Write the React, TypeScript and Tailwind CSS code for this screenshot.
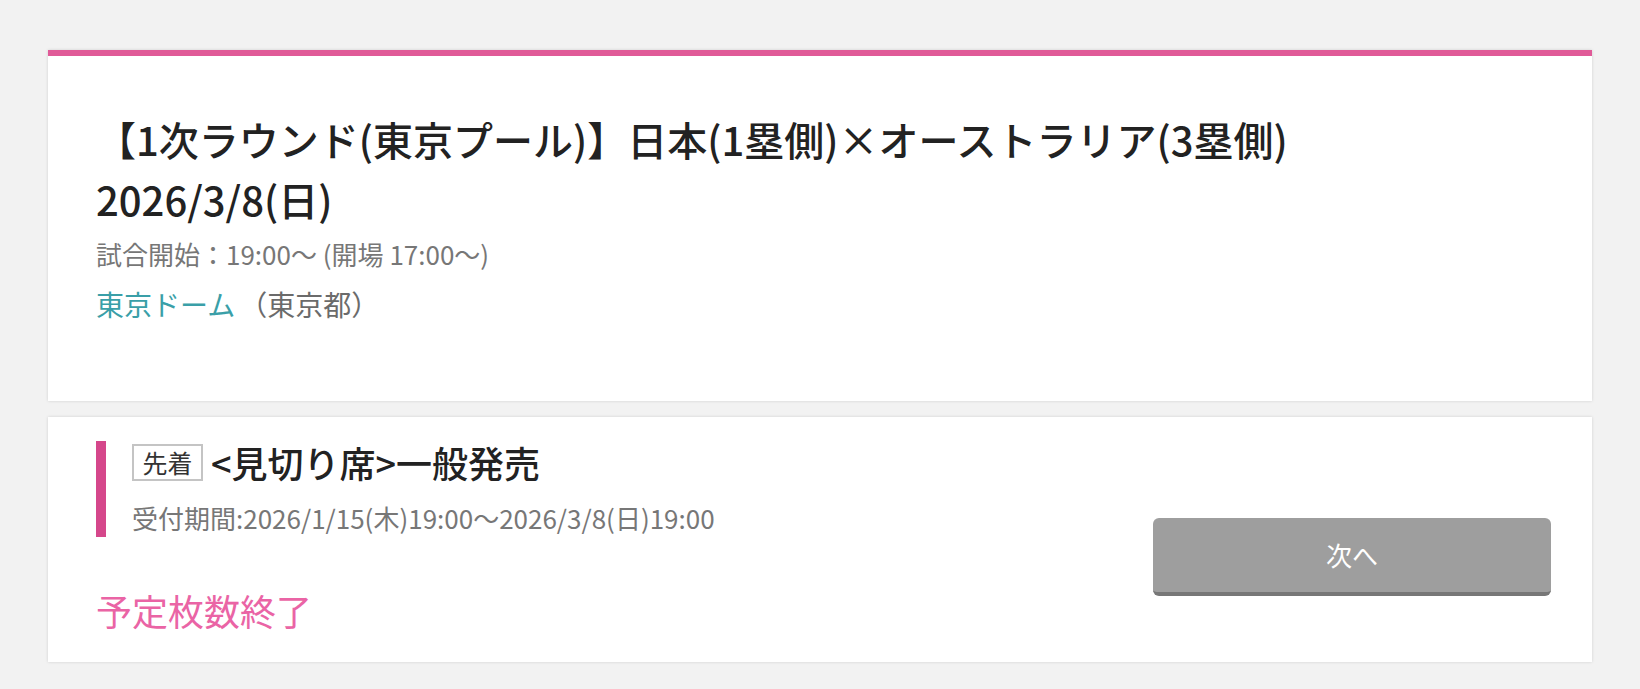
import React from "react";

const font = { fontFamily: '"Noto Sans CJK JP", "Noto Sans", sans-serif' };

export default function App() {
  return (
    <div
      className="min-h-[689px] w-full bg-[#f2f2f2] px-[48px] pt-[50px] pb-[26px]"
      style={font}
    >
      <div className="flex flex-col gap-[16px]">
        {/* Event card */}
        <section className="bg-white border-t-[6px] border-[#e05a98] shadow-[0_0_3px_rgba(0,0,0,0.14)] px-[48px] pt-[53px] pb-[76px]">
          <h1 className="text-[40px] leading-[60px] text-[#222222] font-medium">
            <span className="block">【1次ラウンド(東京プール)】日本(1塁側)×オーストラリア(3塁側)</span>
            <span className="block">2026/3/8(日)</span>
          </h1>
          <p className="mt-[5px] text-[26px] leading-[39px] text-[#777777]">
            試合開始：19:00〜 (開場 17:00〜)
          </p>
          <p className="mt-[10px] text-[28px] leading-[42px]">
            <span className="text-[#3a9fa8]">東京ドーム</span>
            <span className="ml-[4px] text-[#6b6b6b]">（東京都）</span>
          </p>
        </section>

        {/* Sale card */}
        <section className="bg-white shadow-[0_0_3px_rgba(0,0,0,0.14)] pl-[48px] pr-[41px] pt-[24px] pb-[30px] flex items-start">
          <div className="flex-1">
            <div className="border-l-[10px] border-[#d5478b] pl-[26px]">
              <div className="flex items-center h-[42px]">
                <span className="flex items-center justify-center w-[71px] h-[37px] border-2 border-[#c4c4c4] text-[25px] leading-none text-[#333333]">
                  先着
                </span>
                <span className="ml-[8px] text-[36px] leading-[42px] text-[#222222] font-medium">
                  &lt;見切り席&gt;一般発売
                </span>
              </div>
              <p className="mt-[19px] text-[26px] leading-[32px] text-[#777777] pb-[3px]">
                受付期間:2026/1/15(木)19:00〜2026/3/8(日)19:00
              </p>
            </div>
            <p className="mt-[51px] text-[36px] leading-[44px] text-[#ea64a5]">
              予定枚数終了
            </p>
          </div>
          <button className="mt-[77px] w-[398px] h-[78px] rounded-[6px] bg-[#9e9e9e] border-b-4 border-[#777777] text-white text-[26px] leading-none">
            次へ
          </button>
        </section>
      </div>
    </div>
  );
}
